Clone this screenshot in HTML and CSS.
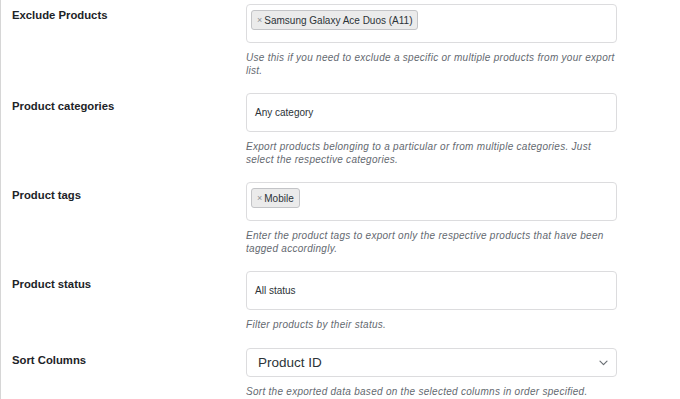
FILE: index.html
```html
<!DOCTYPE html>
<html>
<head>
<meta charset="utf-8">
<link rel="stylesheet" href="styles.css">
</head>
<body>
<div class="panel">
  <div class="row">
    <div class="label label-first">Exclude Products</div>
    <div class="field">
      <div class="box box-multi">
        <span class="chip"><span class="chip-x">×</span>Samsung Galaxy Ace Duos (A11)</span>
      </div>
      <p class="desc">Use this if you need to exclude a specific or multiple products from your export list.</p>
    </div>
  </div>
  <div class="row">
    <div class="label">Product categories</div>
    <div class="field">
      <div class="box box-text">Any category</div>
      <p class="desc">Export products belonging to a particular or from multiple categories. Just select the respective categories.</p>
    </div>
  </div>
  <div class="row">
    <div class="label">Product tags</div>
    <div class="field">
      <div class="box box-multi">
        <span class="chip"><span class="chip-x">×</span>Mobile</span>
      </div>
      <p class="desc">Enter the product tags to export only the respective products that have been tagged accordingly.</p>
    </div>
  </div>
  <div class="row">
    <div class="label">Product status</div>
    <div class="field">
      <div class="box box-text">All status</div>
      <p class="desc">Filter products by their status.</p>
    </div>
  </div>
  <div class="row">
    <div class="label label-select">Sort Columns</div>
    <div class="field">
      <div class="select">
        <span>Product ID</span>
        <svg class="chev" width="9" height="6" viewBox="0 0 9 6"><path d="M1 1.2l3.5 3.5 3.5-3.5" fill="none" stroke="#6b7075" stroke-width="1.2" stroke-linecap="round" stroke-linejoin="round"/></svg>
      </div>
      <p class="desc">Sort the exported data based on the selected columns in order specified.</p>
    </div>
  </div>
</div>
</body>
</html>
```
FILE: styles.css
```css
html, body {
  margin: 0;
  padding: 0;
  background: #fff;
  height: 100%;
  overflow: hidden;
}
body {
  font-family: "Liberation Sans", Arial, sans-serif;
  color: #1d2327;
}
.panel {
  border-left: 1px solid #d6d6d6;
  height: 100%;
  box-sizing: border-box;
  padding-top: 4px;
}
.row {
  display: grid;
  grid-template-columns: 245px 371px;
  margin-bottom: 16px;
}
.label {
  padding-left: 11px;
  padding-top: 7px;
  font-size: 11.3px;
  line-height: 13px;
  font-weight: bold;
  color: #1d2327;
}
.label-first {
  padding-top: 5px;
}
.label-select {
  padding-top: 7px;
}
.box {
  box-sizing: border-box;
  height: 39px;
  border: 1px solid #dcdcde;
  border-radius: 4px;
  background: #fff;
}
.box-multi {
  padding: 4px;
}
.chip {
  display: inline-flex;
  align-items: center;
  box-sizing: border-box;
  height: 20px;
  padding: 0 5px 0 5px;
  border: 1px solid #c3c4c7;
  border-radius: 3px;
  background: #ebebeb;
  font-size: 10px;
  color: #2c3338;
}
.chip-x {
  color: #8c8f94;
  font-size: 9px;
  margin-right: 2px;
}
.box-text {
  display: flex;
  align-items: center;
  padding-left: 8px;
  font-size: 10px;
  color: #2c3338;
}
.select {
  box-sizing: border-box;
  height: 29px;
  margin-top: 1px;
  border: 1px solid #dcdcde;
  border-radius: 4px;
  display: flex;
  align-items: center;
  justify-content: space-between;
  padding: 0 8px 0 11px;
  font-size: 13.5px;
  color: #2c3338;
}
.chev {
  display: block;
}
.desc {
  margin: 8px -2px 0 0;
  font-size: 10px;
  letter-spacing: 0.28px;
  line-height: 13px;
  font-style: italic;
  color: #646970;
}
```
